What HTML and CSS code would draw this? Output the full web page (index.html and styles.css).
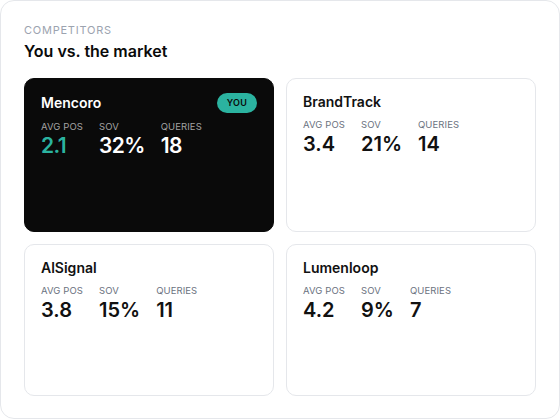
FILE: index.html
```html
<!DOCTYPE html>
<html lang="en">

<head>
    <meta charset="UTF-8">
    <meta name="viewport" content="width=device-width, initial-scale=1.0">
    <title>Competitors</title>
    <link rel="stylesheet" href="styles.css">
</head>

<body>
    <div class="panel">
        <p class="eyebrow">Competitors</p>
        <h1 class="panel-title">You vs. the market</h1>

        <div class="brand-grid">
            <div class="brand-card is-you">
                <div class="brand-head">
                    <h2>Mencoro</h2>
                    <span class="you-badge">YOU</span>
                </div>
                <div class="stats">
                    <div class="stat"><span class="stat-label">AVG POS</span><span class="stat-value accent">2.1</span></div>
                    <div class="stat"><span class="stat-label">SOV</span><span class="stat-value">32%</span></div>
                    <div class="stat"><span class="stat-label">QUERIES</span><span class="stat-value">18</span></div>
                </div>
            </div>

            <div class="brand-card">
                <div class="brand-head">
                    <h2>BrandTrack</h2>
                </div>
                <div class="stats">
                    <div class="stat"><span class="stat-label">AVG POS</span><span class="stat-value">3.4</span></div>
                    <div class="stat"><span class="stat-label">SOV</span><span class="stat-value">21%</span></div>
                    <div class="stat"><span class="stat-label">QUERIES</span><span class="stat-value">14</span></div>
                </div>
            </div>

            <div class="brand-card">
                <div class="brand-head">
                    <h2>AlSignal</h2>
                </div>
                <div class="stats">
                    <div class="stat"><span class="stat-label">AVG POS</span><span class="stat-value">3.8</span></div>
                    <div class="stat"><span class="stat-label">SOV</span><span class="stat-value">15%</span></div>
                    <div class="stat"><span class="stat-label">QUERIES</span><span class="stat-value">11</span></div>
                </div>
            </div>

            <div class="brand-card">
                <div class="brand-head">
                    <h2>Lumenloop</h2>
                </div>
                <div class="stats">
                    <div class="stat"><span class="stat-label">AVG POS</span><span class="stat-value">4.2</span></div>
                    <div class="stat"><span class="stat-label">SOV</span><span class="stat-value">9%</span></div>
                    <div class="stat"><span class="stat-label">QUERIES</span><span class="stat-value">7</span></div>
                </div>
            </div>
        </div>
    </div>
</body>

</html>
```

FILE: styles.css
```css
body {
    margin: 0;
    padding: 0;
    background-color: #ffffff;
    font-family: Inter, 'Noto Sans', sans-serif;
    color: #111111;
}

.panel {
    box-sizing: border-box;
    width: 560px;
    height: 419px;
    padding: 21px 23px 22px 23px;
    border: 1px solid #e5e7eb;
    border-radius: 14px;
    display: flex;
    flex-direction: column;
}

.eyebrow {
    margin: 0;
    font-size: 11px;
    line-height: 16px;
    letter-spacing: 0.07em;
    text-transform: uppercase;
    color: #9ca3af;
}

.panel-title {
    margin: 2px 0 0 0;
    font-size: 16px;
    line-height: 22px;
    font-weight: 600;
    color: #0a0a0a;
}

.brand-grid {
    flex: 1;
    margin-top: 16px;
    display: grid;
    grid-template-columns: 1fr 1fr;
    gap: 12px;
}

.brand-card {
    padding: 14px 16px;
    border: 1px solid #e5e7eb;
    border-radius: 10px;
    background-color: #ffffff;
}

.brand-card.is-you {
    background-color: #0a0a0a;
    border-color: #0a0a0a;
    color: #ffffff;
}

.brand-head {
    display: flex;
    align-items: center;
    justify-content: space-between;
}

.brand-head h2 {
    margin: 0;
    font-size: 14px;
    line-height: 18px;
    font-weight: 600;
}

.you-badge {
    background-color: #2bb3a0;
    color: #0a0a0a;
    font-size: 9px;
    font-weight: 600;
    line-height: 16px;
    padding: 2px 10px;
    border-radius: 999px;
    letter-spacing: 0.02em;
}

.stats {
    display: flex;
    gap: 16px;
    margin-top: 7px;
}

.stat {
    display: flex;
    flex-direction: column;
}

.stat-label {
    font-size: 9.5px;
    line-height: 14px;
    letter-spacing: 0.01em;
    color: #6b7280;
}

.is-you .stat-label {
    color: #a3a3a3;
}

.stat-value {
    font-size: 20px;
    line-height: 24px;
    font-weight: 600;
    color: #111111;
}

.is-you .stat-value {
    font-size: 21px;
    letter-spacing: -0.03em;
    color: #ffffff;
}

.is-you .stat-value.accent {
    color: #2bb3a0;
}
```
